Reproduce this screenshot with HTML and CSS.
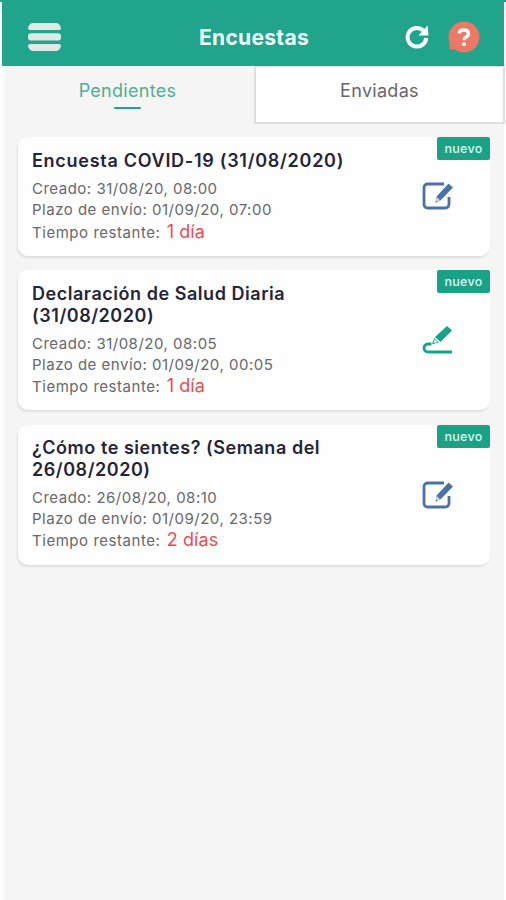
FILE: index.html
```html
<!DOCTYPE html>
<html lang="es">
<head>
<meta charset="utf-8">
<title>Encuestas</title>
<link rel="stylesheet" href="styles.css">
</head>
<body>
<svg class="defs" width="0" height="0" aria-hidden="true">
  <symbol id="edit" viewBox="0 0 32 28">
    <path d="M22 2H6Q2 2 2 6V22Q2 26 6 26H23Q27 26 27 22V15" fill="none" stroke="#4a72a8" stroke-width="2.800"/>
    <path d="M26.500 .5L32 5.500L19 19L12.500 22L14 14Z" fill="#4a72a8" stroke="#fefefe" stroke-width="1.500"/>
    <path d="M14.800 15L18 18.300L13.800 20.200Z" fill="#d5deea"/>
    <path d="M14.300 18.500L15.500 19.500L13.500 20.500Z" fill="#4a72a8"/>
  </symbol>
  <symbol id="sign" viewBox="0 0 32 28">
    <path d="M25 0L30 4.500L18.500 16L13 11Z" fill="#18a387"/>
    <path d="M12.300 12L17 16.500L10 18.200Z" fill="#18a387"/>
    <path d="M12.800 13.200L15.800 16L11.800 16.900Z" fill="#fff"/>
    <path d="M9.500 18H6.500Q2 18.500 2 22Q2 26 7 26H30" fill="none" stroke="#18a387" stroke-width="2.800"/>
  </symbol>
</svg>
<div class="screen">
  <header class="bar">
    <svg class="menu" viewBox="0 0 33 28"><g fill="#dfe9e6"><path d="M4 0H29Q32 1 33 5Q33 7 31 7H2Q0 7 0 5Q1 1 4 0Z"/><rect y="10.300" width="33" height="7.200" rx="3"/><path d="M2 21H31Q33 21 33 23Q32 27 29 28H4Q1 27 0 23Q0 21 2 21Z"/></g></svg>
    <h1>Encuestas</h1>
    <div class="actions">
      <svg class="refresh" viewBox="0 0 24 24"><path d="M18.300 5.500A9.300 9.300 0 1 0 21.200 13" fill="none" stroke="#fff" stroke-width="4"/><path d="M22.500 .5L23.500 10.500H13.500Z" fill="#fff"/></svg>
      <svg class="help" viewBox="0 0 32 32"><circle cx="16" cy="16" r="15.500" fill="#ed7865"/><path d="M1 21L6 28L2 28.500Z" fill="#ed7865"/><path d="M11 12.500Q11.500 9 15.700 9Q20.500 9 20.500 12.800Q20.500 15 17.500 16.500Q16 17.300 16 19.300" fill="none" stroke="#fff" stroke-width="3.300"/><circle cx="16" cy="23.200" r="1.900" fill="#fff"/></svg>
    </div>
  </header>
  <nav class="tabs">
    <div class="tab active"><span>Pendientes</span></div>
    <div class="tab"><span>Enviadas</span></div>
  </nav>
  <main class="list">
    <article class="card">
      <div class="info">
        <h2>Encuesta COVID-19 (31/08/2020)</h2>
        <p>Creado: 31/08/20, 08:00</p>
        <p>Plazo de envío: 01/09/20, 07:00</p>
        <p class="left">Tiempo restante: <b>1 día</b></p>
      </div>
      <svg class="icon"><use href="#edit"/></svg>
      <span class="badge">nuevo</span>
    </article>
    <article class="card tall">
      <div class="info">
        <h2>Declaración de Salud Diaria<br>(31/08/2020)</h2>
        <p>Creado: 31/08/20, 08:05</p>
        <p>Plazo de envío: 01/09/20, 00:05</p>
        <p class="left">Tiempo restante: <b>1 día</b></p>
      </div>
      <svg class="icon"><use href="#sign"/></svg>
      <span class="badge">nuevo</span>
    </article>
    <article class="card tall">
      <div class="info">
        <h2>¿Cómo te sientes? (Semana del<br>26/08/2020)</h2>
        <p>Creado: 26/08/20, 08:10</p>
        <p>Plazo de envío: 01/09/20, 23:59</p>
        <p class="left">Tiempo restante: <b>2 días</b></p>
      </div>
      <svg class="icon"><use href="#edit"/></svg>
      <span class="badge">nuevo</span>
    </article>
  </main>
</div>
</body>
</html>
```

FILE: styles.css
```css
* { box-sizing: border-box; }
body {
  margin: 0;
  background: #fff;
  border-top: 2px solid #20a48c;
  font-family: Inter, sans-serif;
}
h1, h2, p { margin: 0; }
.defs { display: block; }
.screen {
  height: 898px;
  margin: 0 2px;
  background: #f5f5f5;
  border-left: 3px solid #f9f9f9;
}
.bar {
  display: grid;
  grid-template-columns: 1fr auto 1fr;
  align-items: center;
  height: 64px;
  margin-left: -3px;
  padding: 6px 24px 0 26px;
  background: #20a48c;
}
.menu { width: 33px; height: 28px; }
h1 {
  color: #f4fffc;
  font-size: 21px;
  font-weight: 700;
  letter-spacing: .3px;
}
.actions {
  display: flex;
  justify-content: flex-end;
  align-items: center;
  gap: 19px;
}
.refresh { width: 24px; height: 24px; }
.help { width: 32px; height: 32px; }
.tabs {
  display: grid;
  grid-template-columns: 251px 251px;
  height: 58px;
  margin-left: -2px;
}
.tab {
  display: flex;
  flex-direction: column;
  align-items: center;
  padding-top: 12px;
  background: #fff;
  border: 2px solid #dedee0;
  border-top-width: 1px;
  color: #66666c;
  font-size: 18px;
  line-height: 24px;
  letter-spacing: .3px;
}
.tab.active {
  padding: 13px 2px 0 0;
  background: none;
  border: 0;
  color: #4fae93;
}
.tab.active::after {
  content: "";
  width: 27px;
  height: 2px;
  margin-top: 4px;
  border-radius: 1px;
  background: #20a48c;
}
.list {
  display: flex;
  flex-direction: column;
  gap: 14px;
  padding: 13px 14px 0 13px;
}
.card {
  position: relative;
  display: flex;
  justify-content: space-between;
  align-items: center;
  height: 119px;
  padding: 0 36px 0 14px;
  background: #fefefe;
  border-radius: 10px;
  box-shadow: -1px 2px 2px #dfdfdf;
}
.card.tall { height: 140px; }
.card.tall + .tall { margin-top: 1px; }
.info {
  align-self: flex-start;
  padding-top: 13px;
  white-space: nowrap;
}
h2 {
  margin-bottom: 6.500px;
  color: #25253a;
  font-size: 18px;
  font-weight: 600;
  line-height: 21.500px;
  letter-spacing: .72px;
}
.tall h2 { letter-spacing: .54px; }
.info p {
  color: #67676c;
  font-size: 15px;
  line-height: 21.300px;
  letter-spacing: .5px;
}
.info .left { margin-top: 1px; letter-spacing: .54px; }
.card.tall + .tall .info { padding-top: 12px; }
.info b {
  margin-left: 1.500px;
  color: #e94d50;
  font-size: 18px;
  font-weight: 400;
  line-height: 20px;
  letter-spacing: .1px;
}
.icon { width: 32px; height: 28px; margin-bottom: 1px; }
.badge {
  position: absolute;
  top: 0;
  right: 0;
  width: 53px;
  height: 23px;
  border-radius: 2px;
  background: #18a387;
  color: #ddf5ee;
  font-size: 12.500px;
  font-weight: 500;
  line-height: 24px;
  letter-spacing: .3px;
  text-align: center;
}
```
